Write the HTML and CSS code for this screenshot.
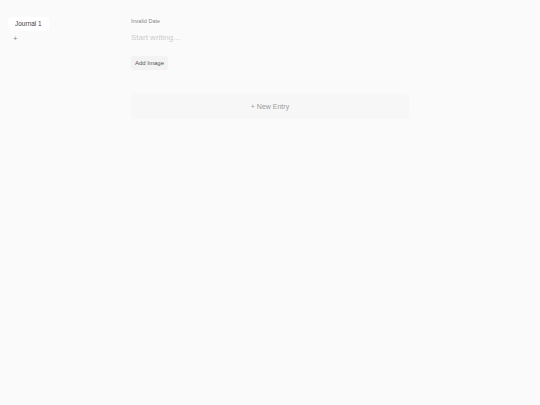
FILE: index.html
```html
<!DOCTYPE html>
<html>
<head>
<meta charset="utf-8">
<link rel="stylesheet" href="styles.css">
</head>
<body>
<div class="app">
  <aside class="sidebar">
    <div class="tab">Journal 1</div>
    <div class="add-tab">+</div>
  </aside>
  <main class="main">
    <div class="entry">
      <div class="date">Invalid Date</div>
      <div class="placeholder">Start writing...</div>
      <button class="add-image">Add Image</button>
    </div>
    <div class="new-entry">+ New Entry</div>
  </main>
</div>
</body>
</html>
```

FILE: styles.css
```css
html, body {
  margin: 0;
  padding: 0;
  background: #fafafa;
  font-family: "Liberation Sans", Arial, sans-serif;
  height: 100%;
}
.app {
  display: flex;
  padding: 16px 8px;
}
.sidebar {
  width: 123px;
  display: flex;
  flex-direction: column;
  align-items: flex-start;
}
.tab {
  margin-top: 1px;
  background: #fff;
  border-radius: 4px;
  padding: 0 7px;
  height: 14px;
  line-height: 14px;
  font-size: 6.5px;
  color: #444;
}
.add-tab {
  margin-top: 3px;
  padding-left: 5px;
  font-size: 8px;
  color: #888;
  line-height: 10px;
}
.main {
  width: 278px;
  display: flex;
  flex-direction: column;
}
.entry {
  display: flex;
  flex-direction: column;
}
.date {
  margin-top: 2px;
  font-size: 5.5px;
  color: #888;
  line-height: 7px;
}
.placeholder {
  margin-top: 8px;
  font-size: 8px;
  color: #ccc;
  line-height: 10px;
}
.add-image {
  margin-top: 13px;
  align-self: flex-start;
  border: none;
  background: #f3f3f3;
  border-radius: 3px;
  font-family: inherit;
  font-size: 6px;
  color: #555;
  height: 14px;
  width: 37px;
  padding: 0;
}
.new-entry {
  margin-top: 24px;
  height: 25px;
  line-height: 25px;
  background: #f7f7f7;
  border-radius: 4px;
  text-align: center;
  font-size: 7px;
  color: #999;
}
```
